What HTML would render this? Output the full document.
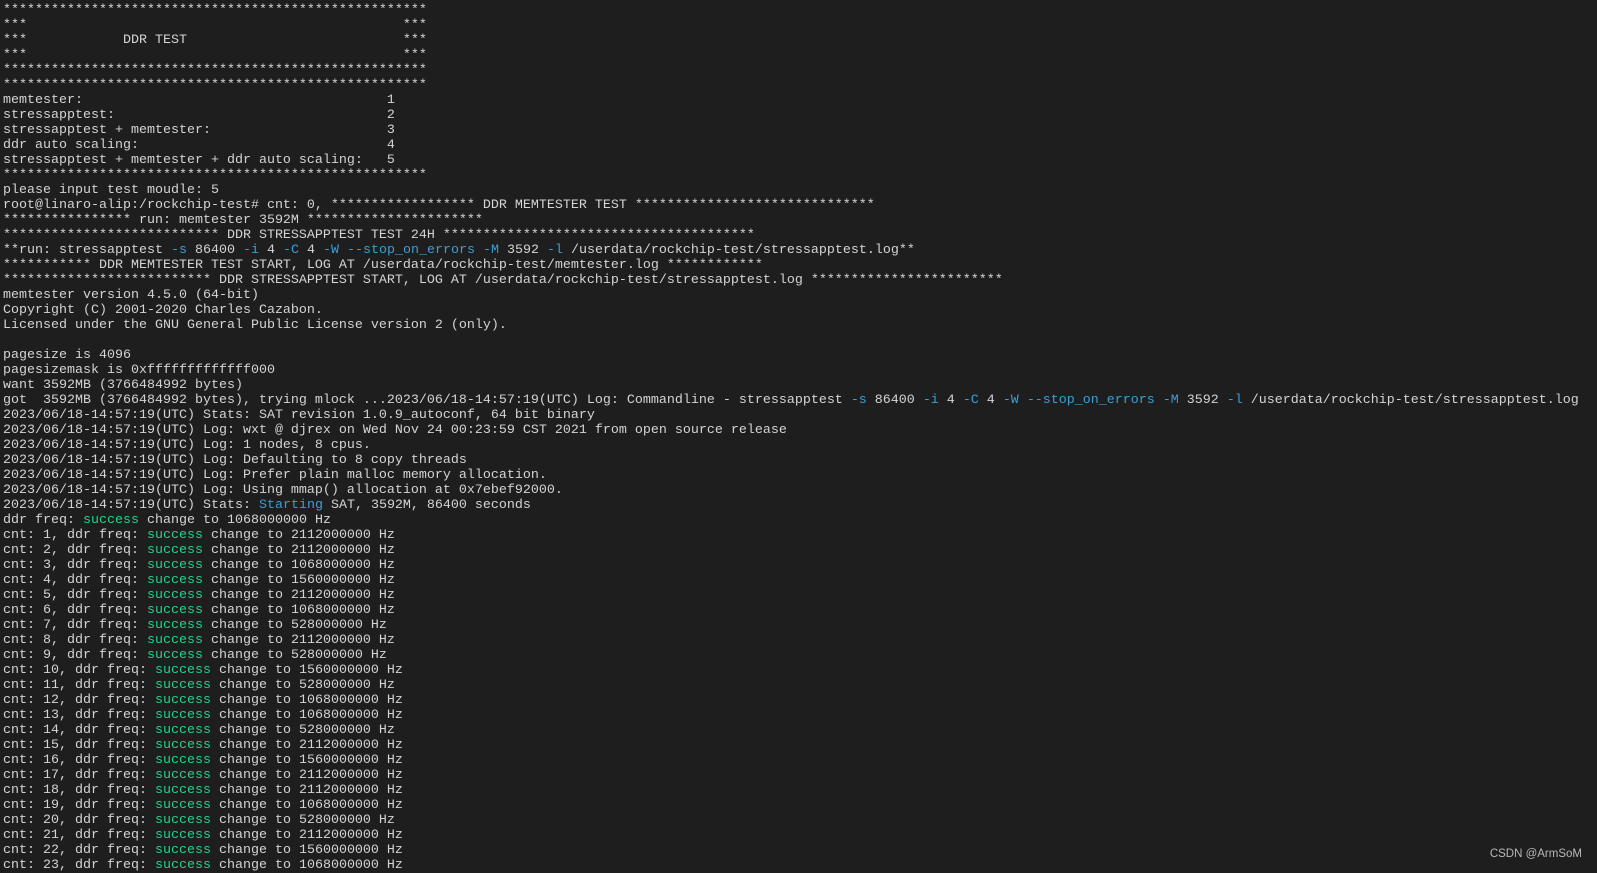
<!DOCTYPE html>
<html><head><meta charset="utf-8"><style>
html,body{margin:0;padding:0;background:#1e1e1e;width:1597px;height:868px;overflow:hidden}
pre{margin:0;position:absolute;left:3px;top:3px;font-family:"Liberation Mono","DejaVu Sans Mono",monospace;font-size:13.33px;line-height:15px;color:#d4d4d4;white-space:pre}
.b{color:#3b9fd6}.g{color:#23d18b}
.wm{position:absolute;right:15px;bottom:8px;font-family:"Liberation Sans",sans-serif;font-size:11.5px;color:#b8b8b8}
</style></head><body>
<pre>*****************************************************
***                                               ***
***            DDR TEST                           ***
***                                               ***
*****************************************************
*****************************************************
memtester:                                      1
stressapptest:                                  2
stressapptest + memtester:                      3
ddr auto scaling:                               4
stressapptest + memtester + ddr auto scaling:   5
*****************************************************
please input test moudle: 5
root@linaro-alip:/rockchip-test# cnt: 0, ****************** DDR MEMTESTER TEST ******************************
**************** run: memtester 3592M **********************
*************************** DDR STRESSAPPTEST TEST 24H ***************************************
**run: stressapptest <span class="b">-s</span> 86400 <span class="b">-i</span> 4 <span class="b">-C</span> 4 <span class="b">-W</span> <span class="b">--stop_on_errors</span> <span class="b">-M</span> 3592 <span class="b">-l</span> /userdata/rockchip-test/stressapptest.log**
*********** DDR MEMTESTER TEST START, LOG AT /userdata/rockchip-test/memtester.log ************
************************** DDR STRESSAPPTEST START, LOG AT /userdata/rockchip-test/stressapptest.log ************************
memtester version 4.5.0 (64-bit)
Copyright (C) 2001-2020 Charles Cazabon.
Licensed under the GNU General Public License version 2 (only).

pagesize is 4096
pagesizemask is 0xfffffffffffff000
want 3592MB (3766484992 bytes)
got  3592MB (3766484992 bytes), trying mlock ...2023/06/18-14:57:19(UTC) Log: Commandline - stressapptest <span class="b">-s</span> 86400 <span class="b">-i</span> 4 <span class="b">-C</span> 4 <span class="b">-W</span> <span class="b">--stop_on_errors</span> <span class="b">-M</span> 3592 <span class="b">-l</span> /userdata/rockchip-test/stressapptest.log
2023/06/18-14:57:19(UTC) Stats: SAT revision 1.0.9_autoconf, 64 bit binary
2023/06/18-14:57:19(UTC) Log: wxt @ djrex on Wed Nov 24 00:23:59 CST 2021 from open source release
2023/06/18-14:57:19(UTC) Log: 1 nodes, 8 cpus.
2023/06/18-14:57:19(UTC) Log: Defaulting to 8 copy threads
2023/06/18-14:57:19(UTC) Log: Prefer plain malloc memory allocation.
2023/06/18-14:57:19(UTC) Log: Using mmap() allocation at 0x7ebef92000.
2023/06/18-14:57:19(UTC) Stats: <span class="b">Starting</span> SAT, 3592M, 86400 seconds
ddr freq: <span class="g">success</span> change to 1068000000 Hz
cnt: 1, ddr freq: <span class="g">success</span> change to 2112000000 Hz
cnt: 2, ddr freq: <span class="g">success</span> change to 2112000000 Hz
cnt: 3, ddr freq: <span class="g">success</span> change to 1068000000 Hz
cnt: 4, ddr freq: <span class="g">success</span> change to 1560000000 Hz
cnt: 5, ddr freq: <span class="g">success</span> change to 2112000000 Hz
cnt: 6, ddr freq: <span class="g">success</span> change to 1068000000 Hz
cnt: 7, ddr freq: <span class="g">success</span> change to 528000000 Hz
cnt: 8, ddr freq: <span class="g">success</span> change to 2112000000 Hz
cnt: 9, ddr freq: <span class="g">success</span> change to 528000000 Hz
cnt: 10, ddr freq: <span class="g">success</span> change to 1560000000 Hz
cnt: 11, ddr freq: <span class="g">success</span> change to 528000000 Hz
cnt: 12, ddr freq: <span class="g">success</span> change to 1068000000 Hz
cnt: 13, ddr freq: <span class="g">success</span> change to 1068000000 Hz
cnt: 14, ddr freq: <span class="g">success</span> change to 528000000 Hz
cnt: 15, ddr freq: <span class="g">success</span> change to 2112000000 Hz
cnt: 16, ddr freq: <span class="g">success</span> change to 1560000000 Hz
cnt: 17, ddr freq: <span class="g">success</span> change to 2112000000 Hz
cnt: 18, ddr freq: <span class="g">success</span> change to 2112000000 Hz
cnt: 19, ddr freq: <span class="g">success</span> change to 1068000000 Hz
cnt: 20, ddr freq: <span class="g">success</span> change to 528000000 Hz
cnt: 21, ddr freq: <span class="g">success</span> change to 2112000000 Hz
cnt: 22, ddr freq: <span class="g">success</span> change to 1560000000 Hz
cnt: 23, ddr freq: <span class="g">success</span> change to 1068000000 Hz</pre>
<div class="wm">CSDN @ArmSoM</div>
</body></html>
